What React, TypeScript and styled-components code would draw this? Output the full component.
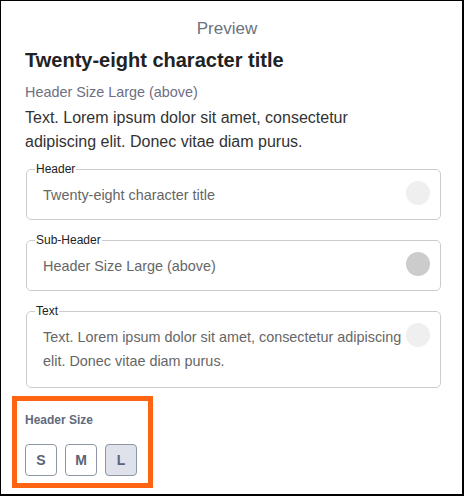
import styled, { createGlobalStyle } from 'styled-components'

const GlobalStyle = createGlobalStyle`
  html, body {
    margin: 0;
    padding: 0;
    background: #fff;
  }
  * {
    box-sizing: border-box;
  }
`

const Frame = styled.div`
  width: 464px;
  height: 496px;
  border-style: solid;
  border-color: #000;
  border-width: 1px 2px 2px 1px;
  background: #fff;
  font-family: "Liberation Sans", Arial, sans-serif;
  display: flex;
  flex-direction: column;
  padding: 0 22px 0 11px;
`

const Preview = styled.div`
  text-align: center;
  font-size: 17px;
  color: #6b7280;
  padding-top: 19px;
  line-height: 18px;
  padding-left: 2px;
`

const Content = styled.div`
  padding-left: 13px;
  display: flex;
  flex-direction: column;
`

const Title = styled.h1`
  margin: 10px 0 0;
  font-size: 20px;
  line-height: 24px;
  font-weight: 700;
  color: #222;
`

const SubTitle = styled.div`
  margin-top: 11px;
  font-size: 14.4px;
  line-height: 18px;
  color: #6e6e85;
`

const Body = styled.p`
  margin: 5px 0 0;
  max-width: 390px;
  font-size: 16px;
  line-height: 24px;
  color: #333;
`

const Fields = styled.div`
  display: flex;
  flex-direction: column;
  gap: 13px;
  margin: 8px 0 0 1px;
  width: 415px;
`

const Field = styled.fieldset`
  margin: 0;
  border: 1px solid #cccccc;
  border-radius: 5px;
  padding: 0 10px 0 16px;
  min-width: 0;
`

const Legend = styled.legend`
  margin-left: -8px;
  padding: 0 1px;
  font-size: 12px;
  line-height: 14px;
  color: #222;
`

const Row = styled.div<{ $bottom: number }>`
  display: flex;
  align-items: flex-start;
  gap: 3px;
  padding: 5px 0 ${(p) => p.$bottom}px;
`

const FieldText = styled.div`
  flex: 1;
  padding-top: 2px;
  font-size: 14.4px;
  line-height: 24px;
  color: #666;
`

const Dot = styled.span<{ $tone: string }>`
  flex: none;
  width: 24px;
  height: 24px;
  border-radius: 50%;
  background: ${(p) => p.$tone};
`

const SizePanel = styled.div`
  margin-top: 8px;
  width: 141px;
  border: 5px solid #ff6412;
  padding: 12px 11px 7px 8px;
  display: flex;
  flex-direction: column;
  gap: 17px;
`

const SizeLabel = styled.div`
  font-size: 12px;
  line-height: 14px;
  font-weight: 700;
  color: #5f6a7d;
`

const SizeButtons = styled.div`
  display: flex;
  gap: 8px;
`

const SizeButton = styled.button<{ $active?: boolean }>`
  width: 32px;
  height: 32px;
  padding: 0;
  border: 1px solid #8e96a5;
  border-radius: 4px;
  background: ${(p) => (p.$active ? '#dfe2ea' : '#fff')};
  font-family: "Liberation Sans", Arial, sans-serif;
  font-size: 14px;
  font-weight: 700;
  color: #5a6478;
  cursor: pointer;
`

const fields = [
  { label: 'Header', text: 'Twenty-eight character title', tone: '#efefef', bottom: 12 },
  { label: 'Sub-Header', text: 'Header Size Large (above)', tone: '#cccccc', bottom: 12 },
  {
    label: 'Text',
    text: 'Text. Lorem ipsum dolor sit amet, consectetur adipiscing elit. Donec vitae diam purus.',
    tone: '#efefef',
    bottom: 14,
  },
]

export default function App() {
  return (
    <>
      <GlobalStyle />
      <Frame>
        <Preview>Preview</Preview>
        <Content>
          <Title>Twenty-eight character title</Title>
          <SubTitle>Header Size Large (above)</SubTitle>
          <Body>
            Text. Lorem ipsum dolor sit amet, consectetur adipiscing elit. Donec vitae diam purus.
          </Body>
          <Fields>
            {fields.map((f) => (
              <Field key={f.label}>
                <Legend>{f.label}</Legend>
                <Row $bottom={f.bottom}>
                  <FieldText>{f.text}</FieldText>
                  <Dot $tone={f.tone} />
                </Row>
              </Field>
            ))}
          </Fields>
        </Content>
        <SizePanel>
          <SizeLabel>Header Size</SizeLabel>
          <SizeButtons>
            <SizeButton>S</SizeButton>
            <SizeButton>M</SizeButton>
            <SizeButton $active>L</SizeButton>
          </SizeButtons>
        </SizePanel>
      </Frame>
    </>
  )
}
